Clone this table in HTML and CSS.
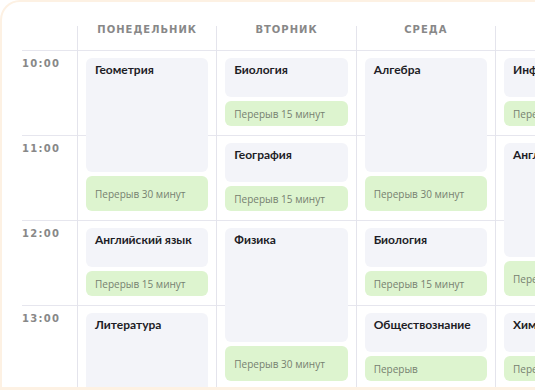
FILE: index.html
```html
<!DOCTYPE html>
<html lang="ru">
<head>
<meta charset="utf-8">
<link rel="stylesheet" href="styles.css">
</head>
<body>
<div class="frame">
  <div class="schedule">
    <div class="col time-col">
      <div class="head"></div>
      <div class="time">10:00</div>
      <div class="time">11:00</div>
      <div class="time">12:00</div>
      <div class="time">13:00</div>
    </div>
    <div class="col day">
      <div class="head">Понедельник</div>
      <div class="slot h2"><div class="lesson">Геометрия</div><div class="brk b30">Перерыв 30 минут</div></div>
      <div class="slot h1"><div class="lesson">Английский язык</div><div class="brk b15">Перерыв 15 минут</div></div>
      <div class="slot h2"><div class="lesson">Литература</div><div class="brk b30">Перерыв 30 минут</div></div>
    </div>
    <div class="col day">
      <div class="head">Вторник</div>
      <div class="slot h1"><div class="lesson">Биология</div><div class="brk b15">Перерыв 15 минут</div></div>
      <div class="slot h1"><div class="lesson">География</div><div class="brk b15">Перерыв 15 минут</div></div>
      <div class="slot h2"><div class="lesson">Физика</div><div class="brk b30">Перерыв 30 минут</div></div>
    </div>
    <div class="col day">
      <div class="head">Среда</div>
      <div class="slot h2"><div class="lesson">Алгебра</div><div class="brk b30">Перерыв 30 минут</div></div>
      <div class="slot h1"><div class="lesson">Биология</div><div class="brk b15">Перерыв 15 минут</div></div>
      <div class="slot h1"><div class="lesson">Обществознание</div><div class="brk b15">Перерыв</div></div>
    </div>
    <div class="col day">
      <div class="head">Четверг</div>
      <div class="slot h1"><div class="lesson">Информатика</div><div class="brk b15">Перерыв 15 минут</div></div>
      <div class="slot h2"><div class="lesson">Английский язык</div><div class="brk b30">Перерыв 30 минут</div></div>
      <div class="slot h1"><div class="lesson">Химия</div><div class="brk b15">Перерыв 15 минут</div></div>
    </div>
  </div>
</div>
</body>
</html>
```
FILE: styles.css
```css
html, body {
  margin: 0;
  padding: 0;
  background: #ffffff;
  overflow: hidden;
}
body {
  width: 535px;
  height: 390px;
  font-family: Lato, "Open Sans", sans-serif;
}
.frame {
  box-sizing: border-box;
  width: 760px;
  height: 390px;
  border: 2px solid #fdf1e3;
  border-bottom-width: 3px;
  border-radius: 20px 0 0 0;
  padding: 24px 0 0 20px;
  overflow: hidden;
  background: #ffffff;
}
.schedule {
  display: grid;
  grid-template-columns: 55px repeat(4, 139.33px);
  height: 500px;
  background-image: linear-gradient(#e6e6ee 0, #e6e6ee 1px, transparent 1px);
  background-size: 100% 85px;
  background-position: 0 24px;
  background-repeat: repeat-y;
}
.col {
  display: flex;
  flex-direction: column;
  box-sizing: border-box;
}
.day {
  border-left: 1px solid #e4e4ec;
}
.head {
  height: 24px;
  flex: none;
  text-align: center;
  font-family: "DejaVu Sans", sans-serif;
  font-size: 10px;
  font-weight: 700;
  line-height: 7px;
  letter-spacing: 1px;
  text-transform: uppercase;
  color: #888888;
}
.time {
  height: 85px;
  flex: none;
  box-sizing: border-box;
  padding-top: 8px;
  font-family: "DejaVu Sans", sans-serif;
  font-size: 10px;
  font-weight: 700;
  line-height: 11px;
  letter-spacing: 1.3px;
  color: #888888;
}
.slot {
  flex: none;
  box-sizing: border-box;
  display: flex;
  flex-direction: column;
  gap: 4px;
  padding: 8px 8px 9px;
}
.h1 { height: 85px; }
.h2 { height: 170px; }
.lesson {
  flex: 1;
  min-height: 0;
  background: #f3f4f9;
  border-radius: 6px;
  padding: 4px 9px;
  font-size: 12px;
  font-weight: 700;
  line-height: 15px;
  color: #1d1d26;
  white-space: nowrap;
  overflow: hidden;
}
.brk {
  flex: none;
  display: flex;
  align-items: center;
  box-sizing: border-box;
  padding: 0 9px;
  background: #ddf4cf;
  border-radius: 6px;
  font-family: "Open Sans", sans-serif;
  font-size: 10px;
  color: #76806f;
  white-space: nowrap;
  overflow: hidden;
}
.b15 { height: 25px; }
.b30 { height: 35px; }
```
